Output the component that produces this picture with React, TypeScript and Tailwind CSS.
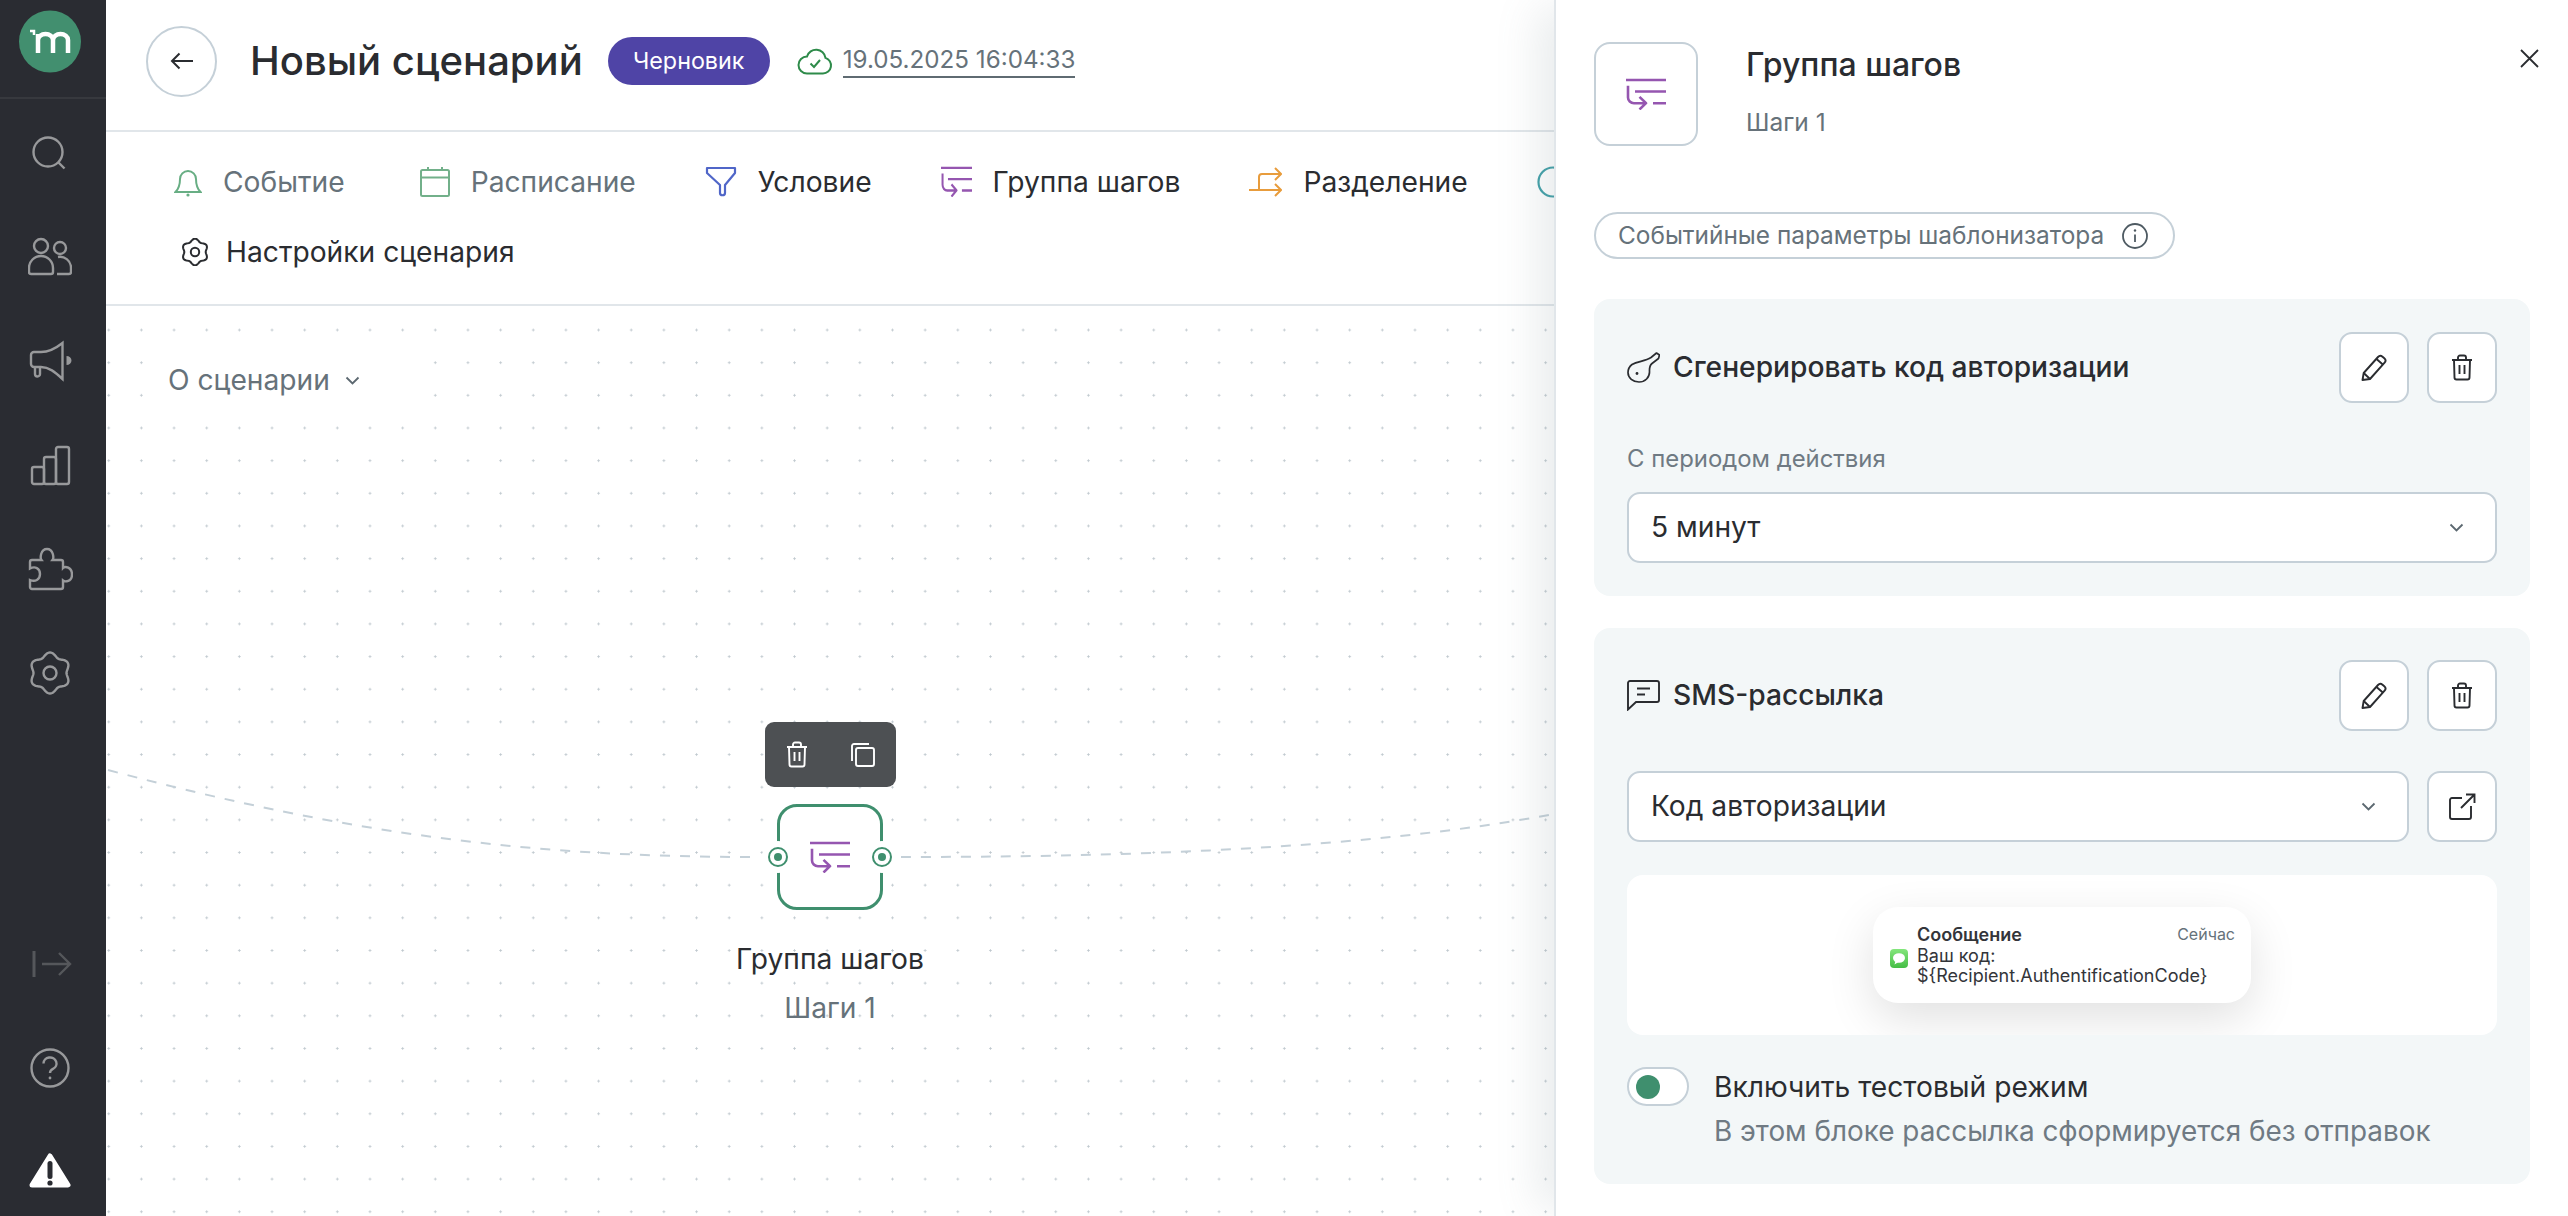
const railIcon = "fill-none stroke-[#98999b] stroke-[2.4]";

function flowerPath(cx: number, cy: number, r: number, a: number) {
  const pts: string[] = [];
  for (let i = 0; i < 120; i++) {
    const t = (i / 120) * Math.PI * 2;
    const rr = r + a * Math.cos(6 * t);
    const x = cx + rr * Math.sin(t);
    const y = cy - rr * Math.cos(t);
    pts.push(`${i === 0 ? "M" : "L"}${x.toFixed(2)} ${y.toFixed(2)}`);
  }
  return pts.join(" ") + "Z";
}

function GroupIcon({ w = 40, h = 32 }: { w?: number; h?: number }) {
  return (
    <svg width={w} height={h} viewBox="0 0 40 33" preserveAspectRatio="none" fill="none" stroke="#9556b0" strokeWidth="2.6">
      <path d="M0 2h40M9 14h31M27 26h13" />
      <path d="M2 8v12a6 6 0 0 0 6 6h12M13.500 19.500 20 26l-6.500 6.500" strokeLinejoin="round" />
    </svg>
  );
}

function TrashIcon({ color = "#2a2c30", className = "" }: { color?: string; className?: string }) {
  return (
    <svg width="22" height="27" viewBox="0 0 22 27" fill="none" stroke={color} strokeWidth="1.9" className={className}>
      <path d="M1 6h20M7 6V3.500A2 2 0 0 1 9 1.500h4a2 2 0 0 1 2 2V6" />
      <path d="M3 6l.5 17.500a2 2 0 0 0 2 2h11a2 2 0 0 0 2-2L19 6M8.500 11v9M13.500 11v9" />
    </svg>
  );
}

function PencilIcon() {
  return (
    <svg width="28" height="28" viewBox="0 0 28 28" fill="none" stroke="#2a2c30" strokeWidth="1.9" strokeLinejoin="round">
      <path d="M2.500 26l1.200-7L18 3a3.200 3.200 0 0 1 4.500-.3l1.800 1.500a3.200 3.200 0 0 1 .3 4.500L10 25z" />
      <path d="M3.700 19 10 25M16.500 5l6.300 5.500" />
    </svg>
  );
}

function ExternalIcon() {
  return (
    <svg width="27" height="27" viewBox="0 0 27 27" fill="none" stroke="#2a2c30" strokeWidth="1.9">
      <path d="M13 5H3a2 2 0 0 0-2 2v17a2 2 0 0 0 2 2h17a2 2 0 0 0 2-2V13" />
      <path d="M12 15 25.500 1.500M17 1.500h8.500V10" />
    </svg>
  );
}

function Chevron({ className = "" }: { className?: string }) {
  return (
    <svg width="15" height="9" viewBox="0 0 15 9" fill="none" stroke="#5c6870" strokeWidth="1.8" className={className}>
      <path d="M1.500 1.500 7.500 7.500l6-6" />
    </svg>
  );
}

function ToolbarItem({ icon, label, muted, className = "" }: { icon: React.ReactNode; label: string; muted?: boolean; className?: string }) {
  return (
    <div className={`flex shrink-0 items-center gap-[21px] ${className}`}>
      {icon}
      <span className={muted ? "text-[#66727a]" : "text-[#2a2c30]"}>{label}</span>
    </div>
  );
}

function SquareButton({ children }: { children: React.ReactNode }) {
  return (
    <button className="flex h-[71px] w-[70px] shrink-0 items-center justify-center rounded-[13px] border-2 border-[#c5d0d8] bg-white">
      {children}
    </button>
  );
}

function Select({ value }: { value: string }) {
  return (
    <div className="flex h-[71px] flex-1 items-center justify-between rounded-[13px] border-2 border-[#c5d0d8] bg-white pl-[22px] pr-[31px] text-[#2a2c30]">
      <span>{value}</span>
      <Chevron />
    </div>
  );
}

function Rail() {
  return (
    <aside className="flex w-[106px] shrink-0 flex-col bg-[#2a2c32]">
      <div className="flex h-[99px] shrink-0 items-start justify-center border-b-2 border-[#37393e] pr-[6px] pt-[10px]">
        <svg width="62" height="63" viewBox="0 0 62 63">
          <circle cx="31" cy="31.500" r="31" fill="#428f6f" />
          <path d="M19 43V24M19 30a7.500 6 0 0 1 15 0v13M34 30a7.500 6 0 0 1 15 0v13" fill="none" stroke="#fff" strokeWidth="4.500" />
          <path d="M11 21h4v4" fill="none" stroke="#fff" strokeWidth="2.500" />
        </svg>
      </div>
      <div className="flex flex-1 flex-col justify-between pr-[6px]">
        <nav className="flex flex-col pt-[2px]">
          <div className="flex h-[104px] items-center justify-center">
            <svg width="44" height="44" viewBox="0 0 44 44" className={railIcon}>
              <circle cx="20" cy="21" r="14.500" />
              <path d="M30 31l6.500 6.500" />
            </svg>
          </div>
          <div className="flex h-[104px] items-center justify-center">
            <svg width="44" height="44" viewBox="0 0 44 44" className={railIcon}>
              <circle cx="13" cy="11" r="7" />
              <path d="M3 39h20a2 2 0 0 0 2-2v-4a12 12 0 0 0-24 0v4a2 2 0 0 0 2 2z" />
              <circle cx="32" cy="13" r="6" />
              <path d="M30 22a11 11 0 0 1 13 10v5a2 2 0 0 1-2 2H29" />
            </svg>
          </div>
          <div className="flex h-[104px] items-center justify-center">
            <svg width="46" height="44" viewBox="0 0 46 44" className={railIcon}>
              <path d="M35.500 4C28 10 22 13 14 13H7a3 3 0 0 0-3 3v9a3 3 0 0 0 3 3h7c8 0 14 5 21.500 12z" />
              <path d="M8 28v7a2.500 2.500 0 0 0 5 0v-7" />
              <path d="M39.500 17a5 4.500 0 0 1 0 9z" fill="#98999b" stroke="none" />
            </svg>
          </div>
          <div className="flex h-[104px] items-center justify-center">
            <svg width="44" height="44" viewBox="0 0 44 44" className={railIcon}>
              <rect x="4" y="24" width="12" height="17" rx="2" />
              <rect x="16" y="14" width="12" height="27" rx="2" />
              <rect x="28" y="4" width="13" height="37" rx="2" />
            </svg>
          </div>
          <div className="flex h-[104px] items-center justify-center">
            <svg width="46" height="44" viewBox="0 0 46 44" className={railIcon}>
              <path d="M5 13h9.500C13 11 13.500 2 20 2s7 9 5.500 11H34a2 2 0 0 1 2 2v6c2-2 9-1 9 6.500S38 35 36 33.500V40a2 2 0 0 1-2 2H5a2 2 0 0 1-2-2v-7c5 2 10 0 10-6s-5-8-10-5.500V15a2 2 0 0 1 2-2z" />
            </svg>
          </div>
          <div className="flex h-[104px] items-center justify-center">
            <svg width="44" height="44" viewBox="0 0 44 44" className={railIcon}>
              <path d={flowerPath(22, 22, 18.500, 2)} />
              <circle cx="22" cy="22" r="6.500" />
            </svg>
          </div>
        </nav>
        <div className="-mb-2 flex flex-col">
          <div className="flex h-[104px] items-center justify-center">
            <svg width="44" height="30" viewBox="0 0 44 30" fill="none" stroke="#55575b" strokeWidth="2.400">
              <path d="M6 2v26" strokeWidth="3" />
              <path d="M14 15h28M31 4l11 11-11 11" />
            </svg>
          </div>
          <div className="flex h-[104px] items-center justify-center">
            <svg width="44" height="44" viewBox="0 0 44 44" className={railIcon}>
              <circle cx="22" cy="22" r="18.500" />
              <path d="M15.500 17.500a6.500 6 0 1 1 9.500 5.300c-2 1-3 2-3 4.200" />
              <circle cx="22" cy="32" r="1.400" fill="#98999b" stroke="none" />
            </svg>
          </div>
          <div className="flex h-[104px] items-center justify-center">
            <svg width="42" height="36" viewBox="0 0 42 36" className="-mt-[3px]">
              <path d="M21 3 39 32H3z" fill="#fff" stroke="#fff" strokeWidth="5" strokeLinejoin="round" />
              <path d="M21 10.500v13" stroke="#2a2c32" strokeWidth="5" strokeLinecap="round" />
              <circle cx="21" cy="30" r="2.600" fill="#2a2c32" />
            </svg>
          </div>
        </div>
      </div>
    </aside>
  );
}

function Header() {
  return (
    <header className="flex h-[132px] shrink-0 items-center border-b-2 border-[#e1e6ea] pb-[8px] pl-[40px]">
      <button className="flex h-[71px] w-[71px] items-center justify-center rounded-full border-2 border-[#c5d0d8]">
        <svg width="24" height="18" viewBox="0 0 24 18" fill="none" stroke="#2a2c30" strokeWidth="2">
          <path d="M23 9H2M9.500 1.500 2 9l7.500 7.500" />
        </svg>
      </button>
      <h1 className="ml-[33px] text-[40px] font-medium whitespace-nowrap text-[#2a2c30]">Новый сценарий</h1>
      <span className="ml-[25px] flex h-[48px] w-[162px] items-center justify-center rounded-full bg-[#4f44a6] text-[23.3px] text-white">
        Черновик
      </span>
      <svg width="36" height="27" viewBox="0 0 36 27" fill="none" stroke="#2e8b4a" strokeWidth="2" className="ml-[27px]">
        <path d="M10 25.500h16a8 8 0 0 0 2.500-15.600A9.500 9.500 0 0 0 10 8.500a8.500 8.500 0 0 0 0 17z" />
        <path d="m13.500 15.500 3.500 3.500 6-7" />
      </svg>
      <span className="ml-[10px] border-b-2 border-[#5f6b72] text-[24.2px] leading-[32px] whitespace-nowrap text-[#66727a]">
        19.05.2025 16:04:33
      </span>
    </header>
  );
}

function Toolbar() {
  return (
    <div className="flex h-[174px] shrink-0 flex-col border-b-2 border-[#e1e6ea] text-[28.2px]">
      <div className="flex h-[100px] items-center gap-[69px] overflow-hidden pl-[68px]">
        <ToolbarItem
          muted
          label="Событие"
          className="mr-[6px]"
          icon={
            <svg width="28" height="31" viewBox="0 0 28 31" fill="none" stroke="#68ae84" strokeWidth="2">
              <path d="M1.500 26h25c-3-3-4.500-6-4.500-13a8 8 0 0 0-16 0c0 7-1.500 10-4.500 13z" />
              <circle cx="14" cy="29" r="1.600" fill="#68ae84" stroke="none" />
            </svg>
          }
        />
        <ToolbarItem
          muted
          label="Расписание"
          icon={
            <svg width="30" height="30" viewBox="0 0 30 30" fill="none" stroke="#72b08a" strokeWidth="2">
              <rect x="1" y="3" width="28" height="26" rx="1.500" />
              <path d="M1 10.500h28M8 0v3M22 0v3" />
            </svg>
          }
        />
        <ToolbarItem
          label="Условие"
          icon={
            <svg width="32" height="31" viewBox="0 0 32 31" fill="none" stroke="#5066c8" strokeWidth="2.200" strokeLinejoin="round">
              <path d="M2 2h28v5L20 19v8c0 3-5 3-5 0v-8L2 7z" />
            </svg>
          }
        />
        <ToolbarItem label="Группа шагов" icon={<GroupIcon w={31} h={31} />} />
        <ToolbarItem
          label="Разделение"
          icon={
            <svg width="33" height="31" viewBox="0 0 33 31" fill="none" stroke="#e89c3c" strokeWidth="2">
              <path d="M0 24h31M26 18l6 6-6 6M10 24V11a3 3 0 0 1 3-3h18M26 2l6 6-6 6" />
            </svg>
          }
        />
        <svg width="32" height="32" viewBox="0 0 32 32" fill="none" stroke="#41a0a8" strokeWidth="2.200" className="shrink-0">
          <circle cx="16" cy="16" r="14.500" />
        </svg>
      </div>
      <div className="flex h-[40px] items-center gap-[17px] pl-[75px]">
        <svg width="28" height="28" viewBox="0 0 28 28" fill="none" stroke="#2a2c30" strokeWidth="2">
          <path d={flowerPath(14, 14, 12, 1.300)} />
          <circle cx="14" cy="14" r="4.200" />
        </svg>
        <span className="text-[#2a2c30]">Настройки сценария</span>
      </div>
    </div>
  );
}

function Canvas() {
  return (
    <div className="relative flex-1 bg-white bg-[radial-gradient(circle,#bfc8ce_0.9px,transparent_1.3px)] bg-[size:32.67px_32.67px] bg-[position:-13.6px_7.7px] text-[28.2px]">
      <svg className="absolute inset-0 h-full w-full" fill="none" stroke="#c4d0d8" strokeWidth="2" strokeDasharray="10 10">
        <path d="M2 464C250 530 430 551 651 551" />
        <path d="M795 551C1000 551 1250 545 1448 508" />
      </svg>
      <button className="absolute left-[42px] top-[39px] flex h-[70px] w-[280px] items-center gap-[15px] bg-white pl-[20px] text-[#66727a]">
        О сценарии
        <Chevron />
      </button>
      <div className="absolute left-[724px] top-[416px] flex w-[300px] -translate-x-1/2 flex-col items-center">
        <div className="flex h-[65px] w-[131px] items-center justify-center gap-[43px] rounded-[9px] bg-[#4d5053]">
          <TrashIcon color="#fff" />
          <svg width="24" height="24" viewBox="0 0 24 24" fill="none" stroke="#fff" strokeWidth="1.900">
            <rect x="5" y="5" width="18" height="18" rx="2" />
            <path d="M1 18V3a2 2 0 0 1 2-2h15" />
          </svg>
        </div>
        <div className="relative mt-[17px] flex h-[106px] w-[106px] items-center justify-center rounded-[20px] border-[3px] border-[#3f8f6e] bg-white">
          <GroupIcon />
          <span className="absolute -left-[18px] top-[34px] flex h-[32px] w-[32px] items-center justify-center rounded-full bg-white">
            <span className="flex h-[20px] w-[20px] items-center justify-center rounded-full border-2 border-[#3f8f6e]">
              <span className="h-[8px] w-[8px] rounded-full bg-[#3f8f6e]" />
            </span>
          </span>
          <span className="absolute -right-[18px] top-[34px] flex h-[32px] w-[32px] items-center justify-center rounded-full bg-white">
            <span className="flex h-[20px] w-[20px] items-center justify-center rounded-full border-2 border-[#3f8f6e]">
              <span className="h-[8px] w-[8px] rounded-full bg-[#3f8f6e]" />
            </span>
          </span>
        </div>
        <div className="mt-[29px] leading-[40px] text-[#2a2c30]">Группа шагов</div>
        <div className="mt-[9px] leading-[40px] text-[#66727a]">Шаги 1</div>
      </div>
    </div>
  );
}

function Panel() {
  return (
    <aside className="relative z-10 w-[1014px] shrink-0 border-l-2 border-[#e1e6ea] bg-white px-[38px] pt-[42px] text-[28.2px] shadow-[-24px_0_40px_-8px_rgba(120,135,145,0.16)]">
      <button className="absolute right-[29px] top-[49px]">
        <svg width="19" height="19" viewBox="0 0 19 19" fill="none" stroke="#2a2c30" strokeWidth="1.800" className="block">
          <path d="m1 1 17 17M18 1 1 18" />
        </svg>
      </button>
      <div className="flex">
        <div className="flex h-[104px] w-[104px] items-center justify-center rounded-[16px] border-2 border-[#c5d0d8]">
          <GroupIcon />
        </div>
        <div className="ml-[48px]">
          <div className="mt-[3px] text-[32px] leading-[40px] font-medium text-[#2a2c30]">Группа шагов</div>
          <div className="mt-[21px] text-[24.5px] leading-[32px] text-[#66727a]">Шаги 1</div>
        </div>
      </div>
      <div className="mt-[66px] flex h-[47px] w-[581px] items-center justify-between rounded-full border-2 border-[#c5d0d8] pl-[22px] pr-[25px] text-[24.4px] text-[#66727a]">
        <span>Событийные параметры шаблонизатора</span>
        <svg width="26" height="26" viewBox="0 0 26 26" fill="none" stroke="#4e5a62" strokeWidth="1.800">
          <circle cx="13" cy="13" r="12" />
          <path d="M13 11.500v7.500" />
          <circle cx="13" cy="7.500" r="1.200" fill="#4e5a62" stroke="none" />
        </svg>
      </div>

      <section className="mt-[40px] rounded-[16px] bg-[#f3f7f8] px-[33px] pb-[33px] pt-[33px]">
        <div className="flex items-center gap-[18px]">
          <div className="flex flex-1 items-center gap-[13px] text-[28.2px] font-medium text-[#2a2c30]">
            <svg width="33" height="31" viewBox="0 0 33 31" fill="none" stroke="#2a2c30" strokeWidth="1.700" strokeLinejoin="round" className="shrink-0">
              <path d="M5 12.500C11 9 18 9.500 24 5.500L29.500 1l3 2-1 3.500-6.500 5c-2 1.500-2.700 3.500-2.500 8 .3 6-4.500 10.500-10.500 10.500S1 26 1 20.500c0-3 1.500-6 4-8z" />
              <circle cx="10" cy="21.500" r="1.400" fill="#2a2c30" stroke="none" />
            </svg>
            Сгенерировать код авторизации
          </div>
          <SquareButton><PencilIcon /></SquareButton>
          <SquareButton><TrashIcon /></SquareButton>
        </div>
        <div className="mb-[16px] mt-[39px] text-[23.9px] leading-[34px] text-[#6f7a83]">С периодом действия</div>
        <div className="flex">
          <Select value="5 минут" />
        </div>
      </section>

      <section className="mt-[32px] rounded-[16px] bg-[#f3f7f8] px-[33px] pb-[33px] pt-[32px]">
        <div className="flex items-center gap-[18px]">
          <div className="flex flex-1 items-center gap-[13px] text-[28.2px] font-medium text-[#2a2c30]">
            <svg width="33" height="31" viewBox="0 0 33 31" fill="none" stroke="#2a2c30" strokeWidth="1.900" className="shrink-0">
              <path d="M1 29.500V3a2 2 0 0 1 2-2h27a2 2 0 0 1 2 2v17a2 2 0 0 1-2 2H9z" />
              <path d="M10 8.500h13M10 14.500h8" />
            </svg>
            SMS-рассылка
          </div>
          <SquareButton><PencilIcon /></SquareButton>
          <SquareButton><TrashIcon /></SquareButton>
        </div>
        <div className="mt-[40px] flex gap-[18px]">
          <Select value="Код авторизации" />
          <SquareButton><ExternalIcon /></SquareButton>
        </div>
        <div className="mt-[33px] flex h-[160px] items-center justify-center overflow-hidden rounded-[16px] bg-white">
          <div className="flex h-[96px] w-[378px] items-center rounded-[25px] bg-white pl-[17px] pr-[16px] text-[18px] text-[#33353a] shadow-[0_16px_48px_rgba(0,0,0,0.12)]">
            <svg width="18" height="19" viewBox="0 0 18 19" className="mt-[6px] shrink-0">
              <defs>
                <linearGradient id="sms-green" x1="0" y1="0" x2="0" y2="1">
                  <stop offset="0" stopColor="#84e67c" />
                  <stop offset="1" stopColor="#45bd45" />
                </linearGradient>
              </defs>
              <rect width="18" height="19" rx="4" fill="url(#sms-green)" />
              <ellipse cx="9" cy="9" rx="6" ry="4.800" fill="#fff" />
              <path d="M5.500 12 4.500 15.500l4-2.500z" fill="#fff" />
            </svg>
            <div className="-mt-[2px] ml-[9px] flex-1">
              <div className="flex items-center justify-between leading-[23px]">
                <span className="text-[18px] font-semibold">Сообщение</span>
                <span className="text-[16px] text-[#66727a]">Сейчас</span>
              </div>
              <div className="leading-[20px]">Ваш код:</div>
              <div className="leading-[20px]">{"${Recipient.AuthentificationCode}"}</div>
            </div>
          </div>
        </div>
        <div className="mt-[32px] flex gap-[25px]">
          <div className="flex h-[39px] w-[62px] shrink-0 items-center rounded-full border-2 border-[#c5d0d8] bg-white pl-[7px]">
            <span className="h-[24px] w-[24px] rounded-full bg-[#3f8f6e]" />
          </div>
          <div>
            <div className="leading-[40px] text-[#2a2c30]">Включить тестовый режим</div>
            <div className="mt-[4px] text-[27.9px] leading-[40px] text-[#6f7a83]">В этом блоке рассылка сформируется без отправок</div>
          </div>
        </div>
      </section>
    </aside>
  );
}

export default function App() {
  return (
    <div className="flex h-screen w-screen overflow-hidden bg-white font-[family-name:Inter,sans-serif]">
      <Rail />
      <main className="flex min-w-0 flex-1 flex-col">
        <Header />
        <Toolbar />
        <Canvas />
      </main>
      <Panel />
    </div>
  );
}
